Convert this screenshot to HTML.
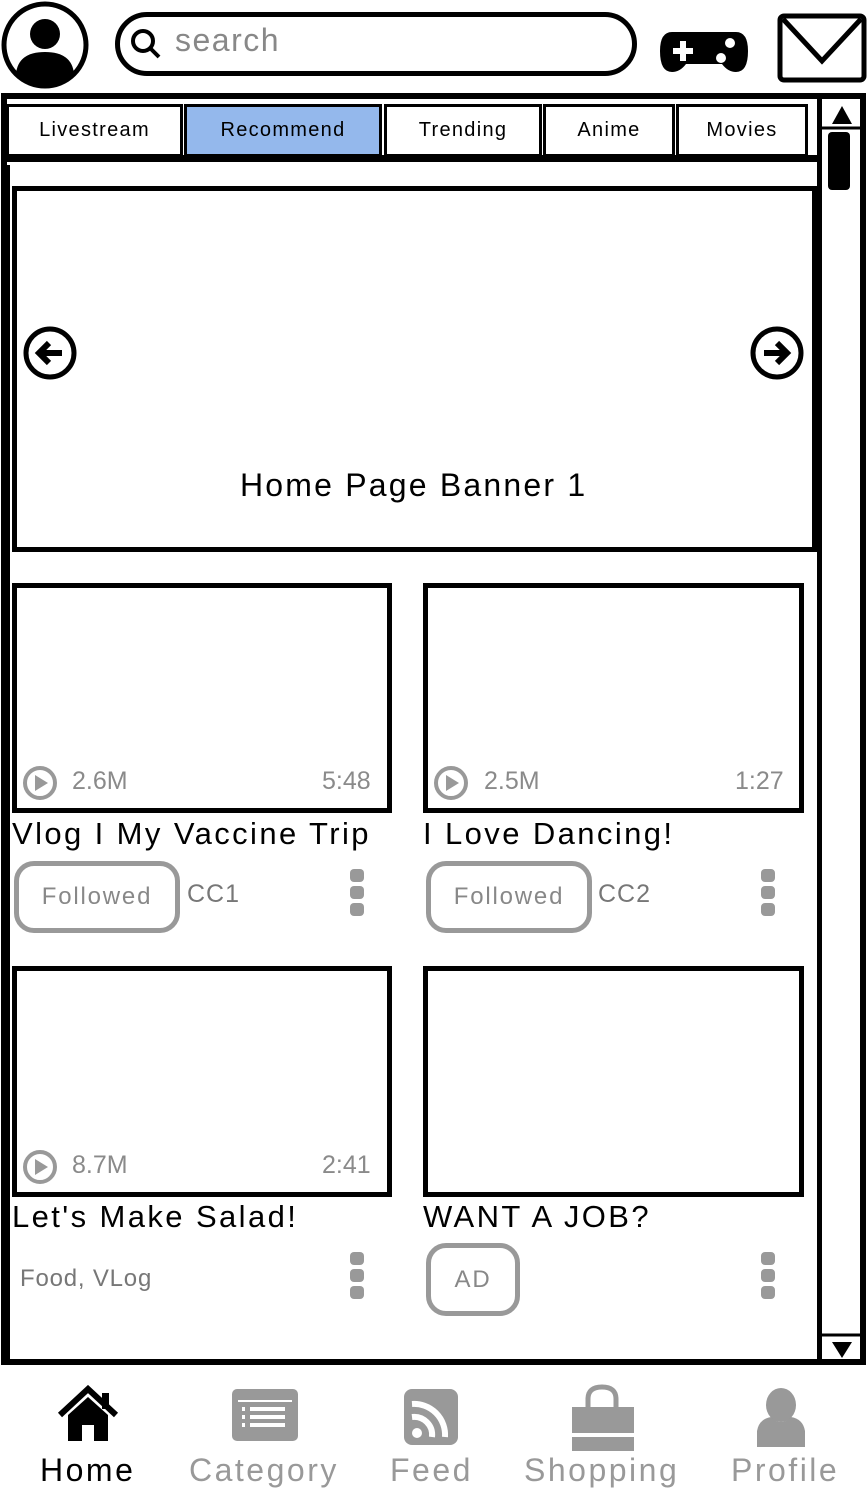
<!DOCTYPE html>
<html><head><meta charset="utf-8"><style>
*{margin:0;padding:0;box-sizing:border-box}
body{width:867px;height:1492px;background:#fff;position:relative;overflow:hidden;font-family:"Liberation Sans",sans-serif}
.a{position:absolute}
.box{position:absolute;border:5px solid #000;background:#fff}
.tab{position:absolute;top:104px;height:53px;border:3px solid #000;background:#fff;font-size:20px;letter-spacing:1.3px;text-align:center;line-height:47px;color:#000}
.t{position:absolute;font-size:31px;letter-spacing:2.4px;color:#000;white-space:nowrap}
.g{color:#8a8a8a}
.pill{position:absolute;border:5px solid #999;border-radius:20px;color:#888;font-size:24px;letter-spacing:1.8px;text-align:center;background:#fff}
.dots{position:absolute;width:14px}
.dots i{display:block;width:14px;height:13px;background:#999;border-radius:4px;margin-bottom:4px}
.nav{position:absolute;top:1452px;font-size:32px;letter-spacing:2.5px;color:#999;text-align:center;white-space:nowrap}
</style></head><body>
<svg class="a" style="left:0;top:0" width="92" height="92"><circle cx="45" cy="45" r="41" fill="#fff" stroke="#000" stroke-width="5"/><circle cx="45" cy="34" r="15" fill="#000"/><path d="M16 74 Q18 52 45 52 Q72 52 74 74 Q60 86 45 86 Q30 86 16 74Z" fill="#000"/></svg>
<div class="a" style="left:115px;top:12px;width:522px;height:64px;border:5px solid #000;border-radius:32px"></div>
<svg class="a" style="left:128px;top:26px" width="36" height="36"><circle cx="15" cy="15" r="10" fill="none" stroke="#000" stroke-width="4"/><path d="M22 22 L31 31" stroke="#000" stroke-width="4"/></svg>
<div class="a g" style="left:175px;top:22px;font-size:32px;letter-spacing:1.5px;color:#888">search</div>
<svg class="a" style="left:658px;top:26px" width="92" height="50"><path d="M14 6 H78 Q90 6 90 25 Q90 46 78 46 Q70 46 64 38 H28 Q22 46 14 46 Q2 46 2 25 Q2 6 14 6Z" fill="#000"/><path d="M15 25 H35 M25 15 V35" stroke="#fff" stroke-width="6"/><circle cx="72" cy="17" r="5" fill="#fff"/><circle cx="63" cy="32" r="5" fill="#fff"/></svg>
<svg class="a" style="left:777px;top:13px" width="90" height="70"><rect x="3" y="3" width="84" height="64" rx="4" fill="#fff" stroke="#000" stroke-width="5"/><path d="M6 6 L45 48 L84 6" fill="none" stroke="#000" stroke-width="5"/></svg>
<div class="a" style="left:1px;top:93px;width:865px;height:1272px;border:6px solid #000"></div>
<div class="a" style="left:6px;top:155px;width:814px;height:7px;background:#000"></div>
<div class="tab" style="left:6px;width:177px">Livestream</div>
<div class="tab" style="left:184px;width:198px;background:#94b8ec">Recommend</div>
<div class="tab" style="left:384px;width:158px">Trending</div>
<div class="tab" style="left:543px;width:132px">Anime</div>
<div class="tab" style="left:676px;width:132px">Movies</div>
<div class="a" style="left:817px;top:98px;width:5px;height:1265px;background:#000"></div>
<svg class="a" style="left:822px;top:100px" width="40" height="30"><path d="M10 24 L20 6 L30 24Z" fill="#000"/><path d="M0 28 H40" stroke="#000" stroke-width="3"/></svg>
<div class="a" style="left:828px;top:132px;width:22px;height:58px;background:#000;border-radius:4px"></div>
<svg class="a" style="left:822px;top:1332px" width="40" height="30"><path d="M0 3 H40" stroke="#000" stroke-width="3"/><path d="M10 10 L30 10 L20 26Z" fill="#000"/></svg>
<div class="a" style="left:6px;top:165px;width:4px;height:1195px;background:#000"></div>
<div class="box" style="left:12px;top:186px;width:805px;height:366px"></div>
<svg class="a" style="left:22px;top:324px" width="58" height="58"><circle cx="28" cy="29" r="24" fill="#fff" stroke="#000" stroke-width="5"/><path d="M40 29 H18 M27 19 L17 29 L27 39" fill="none" stroke="#000" stroke-width="6"/></svg>
<svg class="a" style="left:748px;top:324px" width="58" height="58"><circle cx="29" cy="29" r="24" fill="#fff" stroke="#000" stroke-width="5"/><path d="M16 29 H38 M29 19 L39 29 L29 39" fill="none" stroke="#000" stroke-width="6"/></svg>
<div class="t" style="left:240px;top:467px;font-size:32px;letter-spacing:2.2px">Home Page Banner 1</div>
<div class="box" style="left:12px;top:583px;width:380px;height:230px"></div>
<div class="box" style="left:423px;top:583px;width:381px;height:230px"></div>
<div class="box" style="left:12px;top:966px;width:380px;height:231px"></div>
<div class="box" style="left:423px;top:966px;width:381px;height:231px"></div>
<svg class="a" style="left:22px;top:765px" width="40" height="38"><circle cx="18" cy="18" r="15" fill="none" stroke="#999" stroke-width="4"/><path d="M13 10 L26 18 L13 26Z" fill="#999"/></svg>
<div class="a g" style="left:72px;top:767px;font-size:25px">2.6M</div>
<div class="a g" style="left:322px;top:767px;font-size:25px">5:48</div>
<svg class="a" style="left:433px;top:765px" width="40" height="38"><circle cx="18" cy="18" r="15" fill="none" stroke="#999" stroke-width="4"/><path d="M13 10 L26 18 L13 26Z" fill="#999"/></svg>
<div class="a g" style="left:484px;top:767px;font-size:25px">2.5M</div>
<div class="a g" style="left:735px;top:767px;font-size:25px">1:27</div>
<svg class="a" style="left:22px;top:1149px" width="40" height="38"><circle cx="18" cy="18" r="15" fill="none" stroke="#999" stroke-width="4"/><path d="M13 10 L26 18 L13 26Z" fill="#999"/></svg>
<div class="a g" style="left:72px;top:1151px;font-size:25px">8.7M</div>
<div class="a g" style="left:322px;top:1151px;font-size:25px">2:41</div>
<div class="t" style="left:12px;top:816px">Vlog I My Vaccine Trip</div>
<div class="t" style="left:423px;top:816px">I Love Dancing!</div>
<div class="t" style="left:12px;top:1199px">Let's Make Salad!</div>
<div class="t" style="left:423px;top:1199px">WANT A JOB?</div>
<div class="pill" style="left:14px;top:861px;width:166px;height:72px;line-height:62px">Followed</div>
<div class="a g" style="left:187px;top:880px;font-size:25px;letter-spacing:1px;color:#777">CC1</div>
<div class="pill" style="left:426px;top:861px;width:166px;height:72px;line-height:62px">Followed</div>
<div class="a g" style="left:598px;top:880px;font-size:25px;letter-spacing:1px;color:#777">CC2</div>
<div class="a g" style="left:20px;top:1265px;font-size:24px;letter-spacing:0.8px;color:#777">Food, VLog</div>
<div class="pill" style="left:426px;top:1243px;width:94px;height:73px;line-height:63px">AD</div>
<div class="dots" style="left:350px;top:869px"><i></i><i></i><i></i></div>
<div class="dots" style="left:761px;top:869px"><i></i><i></i><i></i></div>
<div class="dots" style="left:350px;top:1252px"><i></i><i></i><i></i></div>
<div class="dots" style="left:761px;top:1252px"><i></i><i></i><i></i></div>
<svg class="a" style="left:56px;top:1385px" width="64" height="58"><path d="M4 30 L32 4 L60 30" fill="none" stroke="#000" stroke-width="6"/><path d="M12 30 L32 12 L52 30 V56 H38 V40 H26 V56 H12Z" fill="#000"/><rect x="46" y="8" width="7" height="16" fill="#000"/></svg>
<svg class="a" style="left:230px;top:1387px" width="70" height="56"><rect x="2" y="2" width="66" height="52" rx="5" fill="#999"/><path d="M8 14 H62" stroke="#fff" stroke-width="2"/><path d="M12 22h3M12 30h3M12 38h3M20 22h35M20 30h35M20 38h35" stroke="#fff" stroke-width="4"/></svg>
<svg class="a" style="left:402px;top:1387px" width="58" height="60"><rect x="2" y="2" width="54" height="56" rx="8" fill="#999"/><circle cx="15" cy="46" r="5" fill="#fff"/><path d="M10 30 A18 18 0 0 1 30 50 M10 17 A31 31 0 0 1 43 50" fill="none" stroke="#fff" stroke-width="6"/></svg>
<svg class="a" style="left:568px;top:1383px" width="70" height="70"><path d="M20 28 V16 Q20 4 34 4 Q48 4 48 16 V28" fill="none" stroke="#999" stroke-width="5"/><path d="M4 24 H66 V50 H4Z" fill="#999"/><path d="M4 54 H66 V68 H4Z" fill="#999"/></svg>
<svg class="a" style="left:755px;top:1387px" width="52" height="62"><ellipse cx="26" cy="18" rx="15" ry="17" fill="#999"/><path d="M2 60 V44 Q4 32 16 30 Q26 40 36 30 Q48 32 50 44 V60Z" fill="#999"/></svg>
<div class="nav" style="left:40px;color:#000">Home</div>
<div class="nav" style="left:189px">Category</div>
<div class="nav" style="left:390px">Feed</div>
<div class="nav" style="left:524px">Shopping</div>
<div class="nav" style="left:731px">Profile</div>
</body></html>
